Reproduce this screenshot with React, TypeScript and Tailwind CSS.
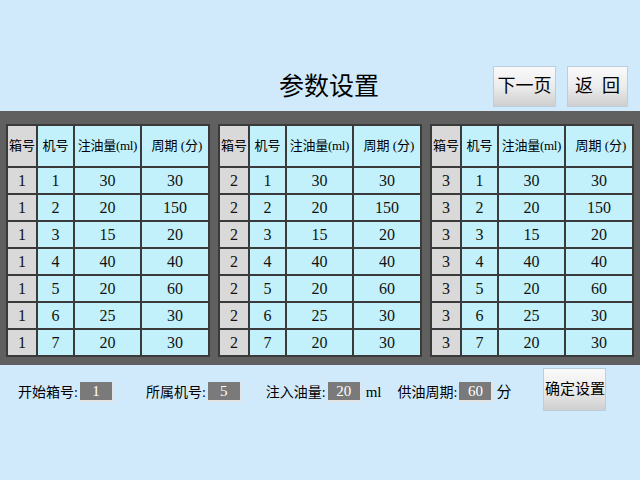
import React from 'react';

type Row = { machine: number; amount: number; period: number };

const rows: Row[] = [
  { machine: 1, amount: 30, period: 30 },
  { machine: 2, amount: 20, period: 150 },
  { machine: 3, amount: 15, period: 20 },
  { machine: 4, amount: 40, period: 40 },
  { machine: 5, amount: 20, period: 60 },
  { machine: 6, amount: 25, period: 30 },
  { machine: 7, amount: 20, period: 30 },
];

const font = { fontFamily: '"Liberation Serif", "Noto Sans CJK SC", serif' };

function BoxTable({ box }: { box: number }) {
  const th =
    'border-2 border-[#3a3a3a] h-[42px] p-0 text-[13px] leading-[18px] font-normal text-black whitespace-nowrap overflow-hidden';
  const td = 'border-2 border-[#3a3a3a] h-[27px] p-0 text-center text-[16px] leading-[20px] text-[#111]';
  return (
    <table className="border-collapse table-fixed w-[202px]">
      <colgroup>
        <col className="w-[30px]" />
        <col className="w-[37px]" />
        <col className="w-[67px]" />
        <col className="w-[68px]" />
      </colgroup>
      <thead>
        <tr>
          <th className={`${th} bg-[#d9d9d9]`}>箱号</th>
          <th className={`${th} bg-[#c2f1fc]`}>机号</th>
          <th className={`${th} bg-[#c2f1fc] tracking-[-0.3px]`}>注油量(ml)</th>
          <th className={`${th} bg-[#c2f1fc] pl-[4px]`}>周期 (分)</th>
        </tr>
      </thead>
      <tbody>
        {rows.map((r) => (
          <tr key={r.machine}>
            <td className={`${td} bg-[#d9d9d9]`}>{box}</td>
            <td className={`${td} bg-[#c2f1fc]`}>{r.machine}</td>
            <td className={`${td} bg-[#c2f1fc]`}>{r.amount}</td>
            <td className={`${td} bg-[#c2f1fc]`}>{r.period}</td>
          </tr>
        ))}
      </tbody>
    </table>
  );
}

function Field({ value, className }: { value: string; className?: string }) {
  return (
    <div
      className={`w-[34px] h-[20px] bg-[#7a7a7a] border-r-2 border-b-2 border-white/80 text-white text-[15px] leading-[18px] text-center ${className ?? ''}`}
    >
      {value}
    </div>
  );
}

const btn =
  'flex items-center justify-center border border-[#b9cfdc] bg-gradient-to-b from-[#fafafa] via-[#ececec] to-[#cfcfcf] text-black';

export default function App() {
  return (
    <div className="w-[640px] h-[480px] bg-[#d0eafc] overflow-hidden" style={font}>
      {/* title + nav buttons */}
      <div className="h-[111px] flex items-center pt-[64px] pb-[3px]">
        <h1 className="ml-[279px] text-[25px] leading-none text-black">参数设置</h1>
        <div className="ml-auto mr-[12px] flex gap-[11px]">
          <button className={`${btn} w-[63px] h-[41px] text-[18px]`}>下一页</button>
          <button className={`${btn} w-[61px] h-[41px] text-[18px] gap-[9px]`}>
            <span>返</span>
            <span>回</span>
          </button>
        </div>
      </div>

      {/* tables */}
      <div className="h-[254px] bg-[#606060] flex items-start gap-[8px] pl-[6px] pt-[13px]">
        <BoxTable box={1} />
        <BoxTable box={2} />
        <BoxTable box={3} />
      </div>

      {/* settings row */}
      <div className="flex items-center h-[54px] text-[14px] text-black">
        <span className="ml-[18px]">开始箱号:</span>
        <Field value="1" className="ml-[2px]" />
        <span className="ml-[32px]">所属机号:</span>
        <Field value="5" className="ml-[2px]" />
        <span className="ml-[24px]">注入油量:</span>
        <Field value="20" className="ml-[2px]" />
        <span className="ml-[4px] text-[15px]">ml</span>
        <span className="ml-[16px]">供油周期:</span>
        <Field value="60" className="ml-[2px]" />
        <span className="ml-[3px] text-[15px]">分</span>
        <button className={`${btn} ml-[32px] w-[63px] h-[43px] text-[15px] mb-[6px]`}>确定设置</button>
      </div>
    </div>
  );
}
